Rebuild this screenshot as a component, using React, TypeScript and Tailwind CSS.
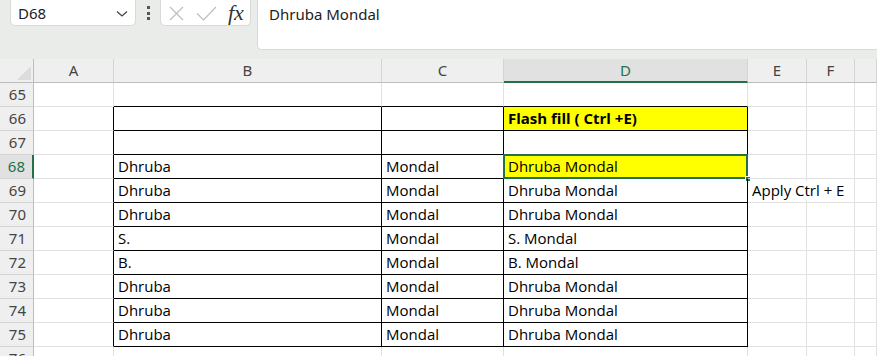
import React from "react";

// column widths incl. right gridline
const cols = [
  { key: "A", w: "w-[80px]" },
  { key: "B", w: "w-[268px]" },
  { key: "C", w: "w-[122px]" },
  { key: "D", w: "w-[244px]" },
  { key: "E", w: "w-[59px]" },
  { key: "F", w: "w-[48px]" },
  { key: "G", w: "flex-1" },
];

type Row = { n: number; b?: string; c?: string; d?: string; e?: string };

const rows: Row[] = [
  { n: 65 },
  { n: 66, d: "Flash fill ( Ctrl +E)" },
  { n: 67 },
  { n: 68, b: "Dhruba", c: "Mondal", d: "Dhruba Mondal" },
  { n: 69, b: "Dhruba", c: "Mondal", d: "Dhruba Mondal", e: "Apply Ctrl + E" },
  { n: 70, b: "Dhruba", c: "Mondal", d: "Dhruba Mondal" },
  { n: 71, b: "S.", c: "Mondal", d: "S. Mondal" },
  { n: 72, b: "B.", c: "Mondal", d: "B. Mondal" },
  { n: 73, b: "Dhruba", c: "Mondal", d: "Dhruba Mondal" },
  { n: 74, b: "Dhruba", c: "Mondal", d: "Dhruba Mondal" },
  { n: 75, b: "Dhruba", c: "Mondal", d: "Dhruba Mondal" },
  { n: 76 },
];

const cellFont = { fontFamily: '"Open Sans", "Noto Sans", sans-serif' };
const uiFont = { fontFamily: '"Noto Sans", "Open Sans", sans-serif' };

function Toolbar() {
  return (
    <div className="flex h-[59px] items-start bg-[#e9ece9]" style={uiFont}>
      <div className="ml-[10px] -mt-[6px] flex h-[32px] w-[126px] items-center justify-between rounded-[5px] border border-[#d8dad8] bg-white pl-[7px] pr-[7px] pt-[6px] text-[15px] text-[#222]">
        <span>D68</span>
        <svg width="12" height="8" viewBox="0 0 12 8" className="mt-[2px]">
          <path d="M1 1.5 L6 6 L11 1.5" fill="none" stroke="#444" strokeWidth="1.3" />
        </svg>
      </div>
      <div className="ml-[11px] mt-[6px] flex flex-col gap-[2.5px]">
        <span className="h-[3px] w-[3px] bg-[#555]" />
        <span className="h-[3px] w-[3px] bg-[#555]" />
        <span className="h-[3px] w-[3px] bg-[#555]" />
      </div>
      <div className="ml-[10px] -mt-[6px] flex h-[32px] w-[91px] items-center rounded-[5px] border border-[#d8dad8] bg-white pl-[8px] pt-[6px]">
        <svg width="15" height="15" viewBox="0 0 15 15">
          <path d="M1 1 L14 14 M14 1 L1 14" stroke="#bdbdbd" strokeWidth="1.2" />
        </svg>
        <svg width="21" height="15" viewBox="0 0 21 15" className="ml-[12px]">
          <path d="M1 7.5 L7.5 14 L20 1" fill="none" stroke="#bdbdbd" strokeWidth="1.2" />
        </svg>
        <span
          className="ml-[11px] text-[22px] italic leading-none text-[#333]"
          style={{ fontFamily: '"Liberation Serif", "Times New Roman", serif' }}
        >
          fx
        </span>
      </div>
      <div className="ml-[6px] -mt-[6px] h-[56px] flex-1 rounded-bl-[5px] border-b border-l border-[#d8dad8] bg-white pl-[11px] pt-[9px] text-[15px] text-[#222]">
        Dhruba Mondal
      </div>
    </div>
  );
}

function HeaderRow() {
  return (
    <div className="flex h-[24px]" style={uiFont}>
      <div className="relative w-[34px] border-b border-r border-[#bdbdbd] bg-[#efefef]">
        <svg width="14" height="14" viewBox="0 0 14 14" className="absolute bottom-[2px] right-[2px]">
          <path d="M14 0 L14 14 L0 14 Z" fill="#dcdcdc" />
        </svg>
      </div>
      {cols.map((c) => {
        const active = c.key === "D";
        return (
          <div
            key={c.key}
            className={`${c.w} flex items-center justify-center text-[15px] ${
              active
                ? "border-b-2 border-r border-b-[#217346] border-r-[#d4d4d4] bg-[#e1e1e1] text-[#217346]"
                : "border-b border-r border-b-[#bdbdbd] border-r-[#d4d4d4] bg-[#efefef] text-[#444]"
            }`}
          >
            {c.key === "G" ? "" : c.key}
          </div>
        );
      })}
    </div>
  );
}

function GridRow({ r }: { r: Row }) {
  const inTable = r.n >= 66 && r.n <= 75;
  const topEdge = r.n === 65;
  const active = r.n === 68;
  const values: Record<string, string | undefined> = { B: r.b, C: r.c, D: r.d, E: r.e };

  return (
    <div className="flex h-[24px]">
      <div
        className={`flex w-[34px] items-center justify-end pr-[7px] text-[15px] ${
          active
            ? "border-b border-r-2 border-b-[#d4d4d4] border-r-[#217346] bg-[#e1e1e1] text-[#217346]"
            : "border-b border-r border-b-[#d4d4d4] border-r-[#bdbdbd] bg-[#efefef] text-[#444]"
        }`}
        style={uiFont}
      >
        {r.n}
      </div>
      {cols.map((c) => {
        const tableCol = c.key === "B" || c.key === "C" || c.key === "D";
        const rightBlack = inTable && (tableCol || c.key === "A");
        const bottomBlack = (inTable || topEdge) && tableCol;
        const yellow = c.key === "D" && (r.n === 66 || r.n === 68);
        const bold = c.key === "D" && r.n === 66;
        const sel = c.key === "D" && active;
        const spill = c.key === "E" && !!r.e;
        return (
          <div
            key={c.key}
            className={`${c.w} relative flex items-end whitespace-nowrap border-b border-r pb-[2px] pl-[4px] text-[15px] leading-[19px] text-black ${
              rightBlack ? "border-r-black" : "border-r-[#e1e1e1]"
            } ${bottomBlack ? "border-b-black" : "border-b-[#e1e1e1]"} ${
              yellow ? "bg-[#ffff00]" : ""
            } ${bold ? "font-bold" : ""} ${spill ? "z-10 pl-[3px]" : ""}`}
            style={cellFont}
          >
            {spill ? <span className="bg-white pr-[2px]">{r.e}</span> : values[c.key] ?? ""}
            {sel && (
              <>
                <div className="pointer-events-none absolute -left-[1px] -top-[1px] -right-[1px] -bottom-[1px] border-2 border-[#217346]" />
                <div className="absolute -bottom-[4px] -right-[4px] h-[6px] w-[6px] border border-white bg-[#217346]" />
              </>
            )}
          </div>
        );
      })}
    </div>
  );
}

export default function App() {
  return (
    <div className="h-[356px] w-[877px] overflow-hidden bg-white">
      <Toolbar />
      <HeaderRow />
      {rows.map((r) => (
        <GridRow key={r.n} r={r} />
      ))}
    </div>
  );
}
